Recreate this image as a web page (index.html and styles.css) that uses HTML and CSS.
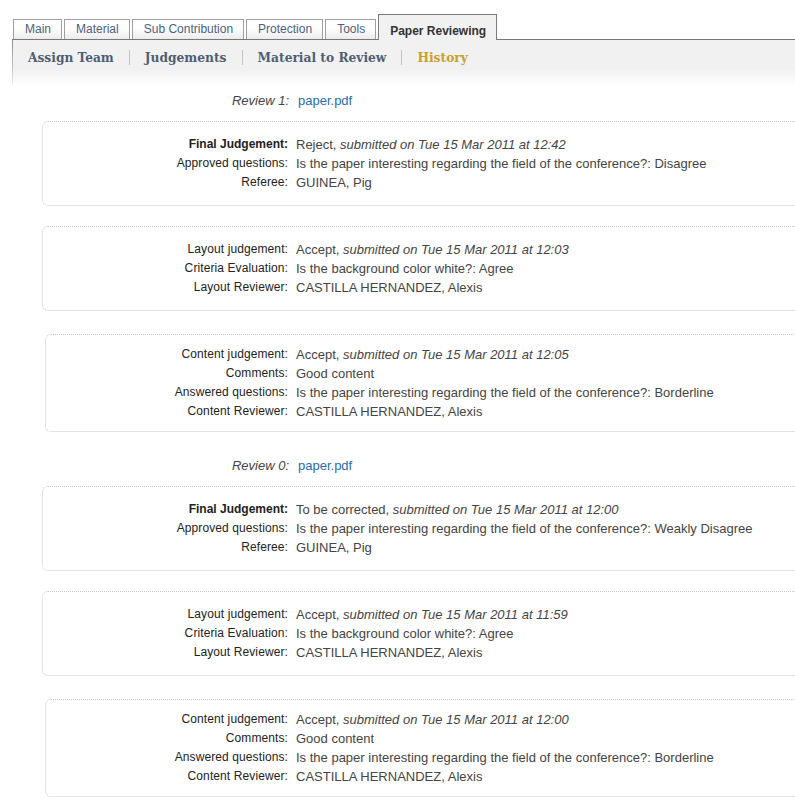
FILE: index.html
```html
<!DOCTYPE html>
<html>
<head>
<meta charset="utf-8">
<title>Paper Reviewing - History</title>
<link rel="stylesheet" href="styles.css">
</head>
<body>
<div class="page">
  <div class="panel">
    <div class="tabs">
      <div class="tab">Main</div>
      <div class="tab">Material</div>
      <div class="tab">Sub Contribution</div>
      <div class="tab">Protection</div>
      <div class="tab">Tools</div>
      <div class="tab active">Paper Reviewing</div>
    </div>
    <div class="subbar">
      <nav class="subnav">
        <span class="item">Assign Team</span>
        <span class="sep"></span>
        <span class="item">Judgements</span>
        <span class="sep"></span>
        <span class="item">Material to Review</span>
        <span class="sep"></span>
        <span class="item current">History</span>
      </nav>
    </div>
  </div>

  <div class="content">
    <div class="review-row first">
      <span class="review-label">Review 1:</span>
      <a class="review-link" href="#">paper.pdf</a>
    </div>

    <div class="box box-a gap-small">
      <div class="lbl strong">Final Judgement:</div><div class="val">Reject, <em>submitted on Tue 15 Mar 2011 at 12:42</em></div>
      <div class="lbl">Approved questions:</div><div class="val">Is the paper interesting regarding the field of the conference?: Disagree</div>
      <div class="lbl">Referee:</div><div class="val">GUINEA, Pig</div>
    </div>

    <div class="box box-a gap-mid">
      <div class="lbl">Layout judgement:</div><div class="val">Accept, <em>submitted on Tue 15 Mar 2011 at 12:03</em></div>
      <div class="lbl">Criteria Evaluation:</div><div class="val">Is the background color white?: Agree</div>
      <div class="lbl">Layout Reviewer:</div><div class="val">CASTILLA HERNANDEZ, Alexis</div>
    </div>

    <div class="box box-b gap-big">
      <div class="lbl">Content judgement:</div><div class="val">Accept, <em>submitted on Tue 15 Mar 2011 at 12:05</em></div>
      <div class="lbl">Comments:</div><div class="val">Good content</div>
      <div class="lbl">Answered questions:</div><div class="val">Is the paper interesting regarding the field of the conference?: Borderline</div>
      <div class="lbl">Content Reviewer:</div><div class="val">CASTILLA HERNANDEZ, Alexis</div>
    </div>

    <div class="review-row second">
      <span class="review-label">Review 0:</span>
      <a class="review-link" href="#">paper.pdf</a>
    </div>

    <div class="box box-a gap-small2">
      <div class="lbl strong">Final Judgement:</div><div class="val">To be corrected, <em>submitted on Tue 15 Mar 2011 at 12:00</em></div>
      <div class="lbl">Approved questions:</div><div class="val">Is the paper interesting regarding the field of the conference?: Weakly Disagree</div>
      <div class="lbl">Referee:</div><div class="val">GUINEA, Pig</div>
    </div>

    <div class="box box-a gap-mid2">
      <div class="lbl">Layout judgement:</div><div class="val">Accept, <em>submitted on Tue 15 Mar 2011 at 11:59</em></div>
      <div class="lbl">Criteria Evaluation:</div><div class="val">Is the background color white?: Agree</div>
      <div class="lbl">Layout Reviewer:</div><div class="val">CASTILLA HERNANDEZ, Alexis</div>
    </div>

    <div class="box box-b gap-big">
      <div class="lbl">Content judgement:</div><div class="val">Accept, <em>submitted on Tue 15 Mar 2011 at 12:00</em></div>
      <div class="lbl">Comments:</div><div class="val">Good content</div>
      <div class="lbl">Answered questions:</div><div class="val">Is the paper interesting regarding the field of the conference?: Borderline</div>
      <div class="lbl">Content Reviewer:</div><div class="val">CASTILLA HERNANDEZ, Alexis</div>
    </div>
  </div>
</div>
</body>
</html>
```

FILE: styles.css
```css
html, body {
  margin: 0;
  padding: 0;
  background: #fff;
  overflow: hidden;
}

body {
  font-family: "Liberation Sans", Arial, sans-serif;
  font-size: 13px;
  color: #444;
}

.page {
  width: 795px;
  overflow: hidden;
}

.panel {
  margin-left: 12px;
  padding-top: 14px;
}

.tabs {
  display: flex;
  align-items: flex-end;
  padding-left: 1px;
  position: relative;
  z-index: 1;
}

.tab {
  height: 19px;
  line-height: 19px;
  padding: 0 10px 0 11px;
  margin-right: 2px;
  border: 1px solid #a0a0a0;
  border-bottom: none;
  background: linear-gradient(#ffffff 40%, #ececec);
  font-size: 12px;
  color: #4d5f7f;
  white-space: nowrap;
}

.tab.active {
  height: 19px;
  padding-top: 6px;
  margin-bottom: -1px;
  border-color: #7a7a7a;
  background: #f1f1f1;
  color: #333;
  font-weight: bold;
  line-height: 20px;
}

.subbar {
  height: 46px;
  border-top: 1px solid #777;
  background:
    linear-gradient(#8a8a8a, #d8d8d8 70%, #ffffff) left top / 1px 52px no-repeat,
    linear-gradient(#f1f1f1 0, #f1f1f1 64%, #ffffff 100%);
}

.subnav {
  display: flex;
  align-items: center;
  padding-left: 16px;
  padding-top: 9px;
  height: 17px;
}

.item {
  font-family: "DejaVu Serif Condensed", "DejaVu Serif", serif;
  font-weight: bold;
  font-size: 13.6px;
  line-height: 17px;
  color: #4f5e74;
  white-space: nowrap;
}

.item.current {
  color: #c9a02a;
}

.sep {
  width: 1px;
  height: 15px;
  background: #c4c4c4;
  margin: 0 15px;
}

.content {
  padding-top: 5px;
}

.review-row {
  display: grid;
  grid-template-columns: 289px auto;
  column-gap: 9px;
  line-height: 19px;
}

.review-row.second {
  margin-top: 24px;
}

.review-label {
  text-align: right;
  font-style: italic;
  color: #444;
}

.review-link {
  color: #1f6db3;
  text-decoration: none;
}

.box {
  display: grid;
  column-gap: 8px;
  width: 900px;
  border: 1px dotted #c8c8c8;
  border-radius: 6px;
  line-height: 19px;
}

.box-a {
  margin-left: 42px;
  padding: 13px 0 13px 12px;
  grid-template-columns: 233px auto;
}

.box-b {
  margin-left: 45px;
  padding: 10px 0 10px 12px;
  grid-template-columns: 230px auto;
}

.gap-small { margin-top: 11px; }
.gap-small2 { margin-top: 11px; }
.gap-mid { margin-top: 20px; }
.gap-mid2 { margin-top: 20px; }
.gap-big { margin-top: 23px; }

.lbl {
  text-align: right;
  color: #222;
  white-space: nowrap;
  font-size: 12px;
  letter-spacing: 0.1px;
}

.lbl.strong {
  font-weight: bold;
  letter-spacing: 0;
}

.val {
  color: #444;
  white-space: nowrap;
}

.val em {
  font-style: italic;
}
```
